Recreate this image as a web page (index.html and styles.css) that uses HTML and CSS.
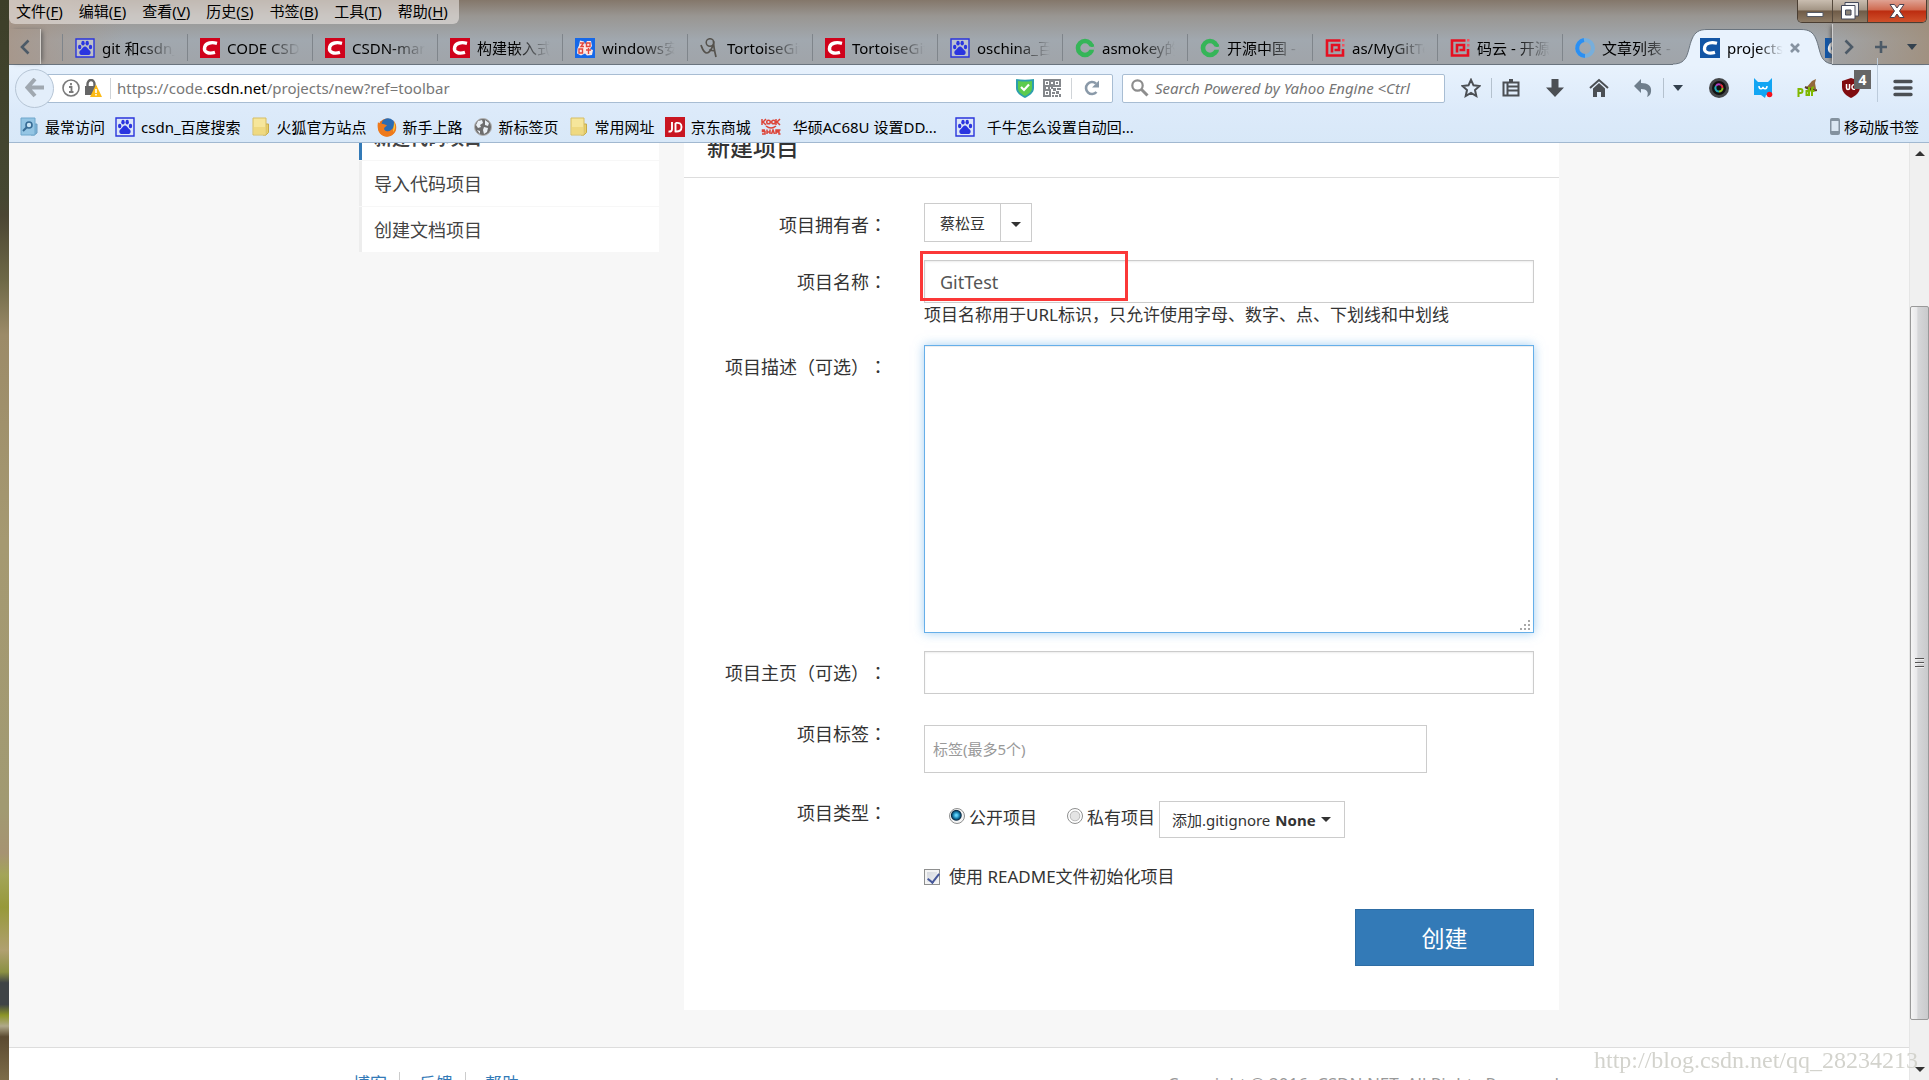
FILE: index.html
```html
<!DOCTYPE html>
<html lang="zh-CN">
<head>
<meta charset="utf-8">
<title>projects</title>
<link rel="stylesheet" href="styles.css">
</head>
<body>
<svg class="defs" aria-hidden="true">
  <symbol id="paw" viewBox="0 0 20 20"><path d="M1 1h18v18H1z" fill="#dfe4f4" fill-opacity=".45" stroke="#2a35dc" stroke-width="1.4"/><g fill="#2a35e0"><ellipse cx="4.7" cy="9" rx="1.7" ry="2.3"/><ellipse cx="8" cy="5.2" rx="1.7" ry="2.4"/><ellipse cx="12.2" cy="5.2" rx="1.7" ry="2.4"/><ellipse cx="15.5" cy="9" rx="1.7" ry="2.3"/><path d="M10 8.6c1.7 0 2.2 1.5 3.4 2.7 1.500 1.200 2.600 2.200 2.200 4-.4 2-2.600 2-5.600 1.600-3 .4-5.200.4-5.600-1.600-.4-1.800.7-2.800 2.200-4C7.800 10.100 8.300 8.600 10 8.600z"/></g></symbol>
  <symbol id="csdn" viewBox="0 0 20 20"><path d="M0 0h20v20H0z" fill="#d0021b"/><path d="M17 5.300c-5-1.300-11-.8-12.300 3.700-1.400 5.300 3.800 7.200 10.300 5.400" fill="none" stroke="#fff" stroke-width="3.400"/></symbol>
  <symbol id="code" viewBox="0 0 20 20"><path d="M0 0h20v20H0z" fill="#1255a5"/><path d="M17 5.300c-5-1.300-11-.8-12.300 3.700-1.400 5.300 3.800 7.200 10.300 5.400" fill="none" stroke="#fff" stroke-width="3.200"/></symbol>
  <symbol id="osc" viewBox="0 0 20 20"><circle cx="10" cy="10" r="7" fill="none" stroke="#35b558" stroke-width="4.600"/><path d="M9.500 8.500h10v3.200h-10z" fill="#a1a7ad"/><path d="M10 9h5l3.500-3v2.800z" fill="#35b558"/></symbol>
  <symbol id="gitee" viewBox="0 0 20 20"><path d="M15.500 2.500H2v15h16V11M7 14.500V7h7v5H9.500" fill="none" stroke="#e60f21" stroke-width="2.600"/><path d="M17 1h2.500v2.500H17zM17 6h2.500v2.500H17z" fill="#ee5561"/></symbol>
  <symbol id="folder" viewBox="0 0 20 20"><path d="M13 7h4.500v8.500l-2.500 2.500h-3z" fill="#e9d06a" stroke="#c4a94a"/><path d="M2 1h13v17H2z" fill="#f6e69b" stroke="#d6bd62"/><path d="M3 10h11v7H3z" fill="#efd980"/></symbol>
</svg>

<div class="desktop">
<div class="wallpaper"></div>
<div class="window">
  <header class="chrome">
    <div class="titlebar">
      <nav class="menubar">
        <button>文件(<u>F</u>)</button><button>编辑(<u>E</u>)</button><button>查看(<u>V</u>)</button><button>历史(<u>S</u>)</button><button>书签(<u>B</u>)</button><button>工具(<u>T</u>)</button><button>帮助(<u>H</u>)</button>
      </nav>
      <div class="controls">
        <button aria-label="最小化"><svg width="18" height="18" viewBox="0 0 18 18"><path d="M1 10.500h16v4H1z" fill="#fff" stroke="#555a66"/></svg></button>
        <button aria-label="还原"><svg width="18" height="18" viewBox="0 0 18 18"><path d="M4 .5h13.500V14H4z" fill="#eee" stroke="#44495a"/><path d="M.5 3.500H14V17H.5z" fill="#fff" stroke="#44495a"/><path d="M4.500 8h5.500v5H4.500z" fill="#8b8276" stroke="#44495a"/></svg></button>
        <button class="close" aria-label="关闭"><svg width="18" height="18" viewBox="0 0 18 18"><path d="M2 2.500h4.500L9 6l2.500-3.500H16L11.500 9l4.500 6.500h-4.500L9 12l-2.500 3.500H2L6.500 9z" fill="#fff" stroke="#4b4250"/></svg></button>
      </div>
    </div>

    <div class="tabbar">
      <button class="scroll-left" aria-label="向左滚动"><svg width="12" height="16" viewBox="0 0 12 16"><path d="M9.500 1.500L3 8l6.500 6.500" fill="none" stroke="#4c5a67" stroke-width="2.600"/></svg></button>
      <div class="tabs">
        <a href="#" class="tab"><svg><use href="#paw"/></svg><span>git 和csdn_百度</span></a>
        <a href="#" class="tab"><svg><use href="#csdn"/></svg><span>CODE CSDN</span></a>
        <a href="#" class="tab"><svg><use href="#csdn"/></svg><span>CSDN-markdown</span></a>
        <a href="#" class="tab"><svg><use href="#csdn"/></svg><span>构建嵌入式系统</span></a>
        <a href="#" class="tab"><svg viewBox="0 0 20 20"><path d="M0 0h20v20H0z" fill="#1668e8"/><path d="M5 2.500l4 1 1 3 2-3.500h4l1 5-2 3 3 1-1 5-5 .500-2-2-4 2-4-2 .500-5 1.500-3z" fill="#fbe9e6"/><path d="M5 5h3.500l-2.500 3.500h3M4 11h3.500v4H4zM11.500 5H15v3.500h-3.500zM11 12h5M13.500 10v6" fill="none" stroke="#e2473c" stroke-width="1.400"/></svg><span>windows安装</span></a>
        <a href="#" class="tab"><svg viewBox="0 0 20 20"><circle cx="10" cy="4.500" r="3.800" fill="none" stroke="#55524d" stroke-width="1.500"/><path d="M1 7c1.500 4 2.500 8 6 8 3 0 5-5 6.500-8.500M13.500 3c0 6 1 10 2.500 16M9 12l6 1" fill="none" stroke="#55524d" stroke-width="1.700"/></svg><span>TortoiseGit</span></a>
        <a href="#" class="tab"><svg><use href="#csdn"/></svg><span>TortoiseGit</span></a>
        <a href="#" class="tab"><svg><use href="#paw"/></svg><span>oschina_百度</span></a>
        <a href="#" class="tab"><svg><use href="#osc"/></svg><span>asmokey的</span></a>
        <a href="#" class="tab"><svg><use href="#osc"/></svg><span>开源中国 -</span></a>
        <a href="#" class="tab"><svg><use href="#gitee"/></svg><span>as/MyGitTest</span></a>
        <a href="#" class="tab"><svg><use href="#gitee"/></svg><span>码云 - 开源中</span></a>
        <a href="#" class="tab"><svg viewBox="0 0 20 20"><circle cx="10" cy="10" r="8" fill="none" stroke="#77aedb" stroke-width="4"/><path d="M10 18a8 8 0 0 1-1-15.900" fill="none" stroke="#2b8ff2" stroke-width="4"/></svg><span>文章列表 -</span></a>
        <a href="#" class="tab active"><svg class="shape" viewBox="0 0 162 36"><path d="M0 35C16 35 14 22 19 10 22 3 26 .5 34 .500H128C136 .5 140 3 143 10 148 22 146 35 162 35V36H0z" fill="#e8f2fd"/><path d="M0 35C16 35 14 22 19 10 22 3 26 .5 34 .500H128C136 .5 140 3 143 10 148 22 146 35 162 35" fill="none" stroke="#6a747e"/></svg><svg><use href="#code"/></svg><span>projects/new</span><svg class="x" viewBox="0 0 10 10"><path d="M1 1l8 8M9 1L1 9" stroke="#8693a1" stroke-width="2.600"/></svg></a>
        <a href="#" class="tab last"><svg><use href="#code"/></svg></a>
      </div>
      <div class="tab-tools">
        <button aria-label="向右滚动"><svg width="12" height="16" viewBox="0 0 12 16"><path d="M2.500 1.500L9 8l-6.500 6.500" fill="none" stroke="#4c5a67" stroke-width="2.600"/></svg></button>
        <button aria-label="新标签"><svg width="14" height="14" viewBox="0 0 14 14"><path d="M7 1v12M1 7h12" stroke="#4c5a67" stroke-width="2.600"/></svg></button>
        <button aria-label="所有标签"><svg width="10" height="6" viewBox="0 0 10 6"><path d="M0 0h10L5 6z" fill="#33414e"/></svg></button>
      </div>
    </div>

    <div class="navbar">
      <button class="back" aria-label="后退"><svg width="20" height="20" viewBox="0 0 20 20"><path d="M10 1L2.500 9.500 10 18M3 9.500h16" fill="none" stroke="#a0a8b0" stroke-width="4"/></svg></button>
      <div class="urlbar">
        <svg width="18" height="18" viewBox="0 0 18 18"><circle cx="9" cy="9" r="8" fill="none" stroke="#7a7a7a" stroke-width="1.600"/><path d="M9 4v2.200M7 8h2.500v5M7 13h4.500" stroke="#7a7a7a" stroke-width="1.800" fill="none"/></svg>
        <svg width="18" height="18" viewBox="0 0 18 18"><path d="M3.500 8V5a3.500 4 0 0 1 7 0v3" fill="none" stroke="#666" stroke-width="2.400"/><path d="M1 7h12v9H1z" fill="#666"/><path d="M12 5.500L18 18H6z" fill="#fdbb16"/><path d="M12 10v4M12 15v1.500" stroke="#fff" stroke-width="1.600"/></svg>
        <i class="bar"></i>
        <a class="url" href="#">https://code.<b>csdn.net</b>/projects/new?ref=toolbar</a>
        <svg width="18" height="20" viewBox="0 0 18 20"><path d="M0 1c6 1 12 1 18 0v9c0 5-5 8-9 10-4-2-9-5-9-10z" fill="#2d9fae"/><path d="M2 3c5 .8 9 .8 14 0v7c0 4-4 6.500-7 8-3-1.500-7-4-7-8z" fill="#5ccb4e"/><path d="M5 9l3 3 5-5.500" stroke="#fff" stroke-width="2.200" fill="none"/></svg>
        <svg class="qr" width="18" height="18" viewBox="0 0 18 18"><path d="M1 1h6v6H1zM11 1h6v6h-6zM1 11h6v6H1z" fill="none" stroke="#84878b" stroke-width="2"/><path d="M3 3h2v2H3zM13 3h2v2h-2zM3 13h2v2H3zM8 0h2v3H8zM8 5h2v5H8zM10 9h3v3h-3zM14 9h4v2h-4zM9 13h3v2H9zM13 12h3v3h-3zM16 15h2v3h-2zM9 16h2v2H9zM12 16h3v2h-3zM0 8h3v2H0zM5 8h2v2H5z" fill="#84878b"/></svg>
        <i class="bar"></i>
        <svg class="reload" width="16" height="16" viewBox="0 0 16 16"><path d="M12.500 12A6 6 0 1 1 12 3.500" fill="none" stroke="#8a99a8" stroke-width="2.600"/><path d="M15 .5v7H8z" fill="#8a99a8"/></svg>
      </div>
      <label class="search"><svg width="18" height="18" viewBox="0 0 18 18"><circle cx="6.500" cy="6.500" r="5.200" fill="none" stroke="#8d8d8d" stroke-width="2.200"/><path d="M10.500 10.500L16.500 16.500" stroke="#8d8d8d" stroke-width="3"/></svg><input type="text" aria-label="搜索" placeholder="Search Powered by Yahoo Engine &lt;Ctrl"></label>
      <div class="tools">
        <button aria-label="收藏"><svg viewBox="0 0 20 20"><path d="M10 1.800l2.500 5.500 6 .7-4.500 4 1.300 6L10 15l-5.300 3 1.300-6-4.500-4 6-.7z" fill="none" stroke="#4b4f54" stroke-width="2"/></svg></button>
        <button aria-label="书签列表" class="ruled"><svg viewBox="0 0 20 20"><path d="M8 1h4v3H8z" fill="#4b4f54"/><path d="M2.500 4.500h15v13h-15zM6.500 5v12M7 8.500h10M7 12.500h10" fill="none" stroke="#4b4f54" stroke-width="2"/></svg></button>
        <button aria-label="下载"><svg viewBox="0 0 20 20"><path d="M6.500 1h7v8.500H19L10 19 1 9.500h5.500z" fill="#4b4f54"/></svg></button>
        <button aria-label="主页"><svg viewBox="0 0 20 20"><path d="M1 10l9-8 9 8" fill="none" stroke="#4b4f54" stroke-width="2"/><path d="M4 10.500l6-5.500 6 5.500V19h-4v-5H8v5H4z" fill="#4b4f54"/></svg></button>
        <button aria-label="撤销"><svg viewBox="0 0 20 20"><path d="M8 1v4c7 0 11 3 10 9-.5 3-2 4-4 5 2-5 0-8-6-8v4L1 8z" fill="#6f7e8c"/></svg></button>
        <button aria-label="更多" class="ruled small"><svg viewBox="0 0 10 6"><path d="M0 0h10L5 6z" fill="#33414e"/></svg></button>
        <button aria-label="相机"><svg viewBox="0 0 20 20"><circle cx="10" cy="10" r="10" fill="#45474a"/><circle cx="10" cy="10" r="7" fill="#111"/><g fill="none" stroke-width="2"><path d="M7 8a3.500 3.500 0 0 1 4.500-1.300" stroke="#b13bc4"/><path d="M11.500 6.700A3.500 3.500 0 0 1 13.500 10" stroke="#e0303c"/><path d="M13.500 10a3.500 3.500 0 0 1-3.500 3.500" stroke="#8fbf26"/><path d="M10 13.500A3.500 3.500 0 0 1 7 8" stroke="#22a6b8"/></g></svg></button>
        <button aria-label="扩展"><svg viewBox="0 0 20 20"><path d="M1 0l4 4h10l4-4v16l-6 1-1 3-4-3H1z" fill="#12a5f3"/><path d="M6 8c0 3.500 3.500 3.500 4 1 .5 2.500 4 2.500 4-1" fill="none" stroke="#fff" stroke-width="1.500"/><circle cx="16.500" cy="16.500" r="2.800" fill="#f5121d"/></svg></button>
        <button aria-label="PDF"><svg viewBox="0 0 20 20"><path d="M9 10l6-7 4-2-1 4 1 6-5 2z" fill="#93683b"/><path d="M8 9c4 2 8 4 12 3" stroke="#594022" stroke-width="2" fill="none"/><path d="M1.500 19v-8h2a2 2 0 0 1 0 4h-2M12 9v8H9.500v-4H12M15 18v-7q0-2 2-1.500M13.500 13h4" stroke="#80b800" stroke-width="2" fill="none"/></svg></button>
        <button aria-label="uBlock" class="ub"><svg viewBox="0 0 20 20"><path d="M10 0l9 3v6c0 6-5 9-9 11-4-2-9-5-9-11V3z" fill="#800c10"/><path d="M5.500 6v4q0 1.500 1.500 1.500T8.500 10V6M14 7q-3-1-3 2t3 2" fill="none" stroke="#fff" stroke-width="1.500"/></svg><span>4</span></button>
        <button aria-label="菜单" class="burger"><svg viewBox="0 0 20 20"><path d="M2 3.500h16M2 10h16M2 16.500h16" stroke="#4b4f54" stroke-width="3.400" stroke-linecap="round"/></svg></button>
      </div>
    </div>

    <nav class="bookmarks">
      <a href="#"><svg viewBox="0 0 20 20"><path d="M13 7h5v9l-3 2h-3z" fill="#7fb4d8" stroke="#6a9cc0"/><path d="M2 1h14v17H2z" fill="#94c5e4" stroke="#6fa7cc"/><circle cx="10" cy="8" r="3" fill="#c9e4f5" stroke="#376b94" stroke-width="1.600"/><path d="M8 10l-4 4" stroke="#376b94" stroke-width="2"/></svg>最常访问</a>
      <a href="#"><svg><use href="#paw"/></svg>csdn_百度搜索</a>
      <a href="#"><svg><use href="#folder"/></svg>火狐官方站点</a>
      <a href="#"><svg viewBox="0 0 20 20"><circle cx="10" cy="10.500" r="9" fill="#e8701a"/><circle cx="11" cy="8" r="6.800" fill="#2b6cb3"/><path d="M1 5c1 2 3 1 5 2 2 .5 3 1 4 1-1 2-3 2-3 4 1 3 5 3 7 1 3-2 4-6 3-9 3 4 3 9 0 12.500-4 4.500-11 4-14 0C.5 13 .2 9 1 5z" fill="#ee7a1c"/><path d="M17 5c2 4 1 8-1 10 0-3 1-6 1-10z" fill="#fcc83a"/></svg>新手上路</a>
      <a href="#"><svg viewBox="0 0 20 20"><circle cx="10" cy="10" r="8.500" fill="#6d6d6d" stroke="#b3b3b3"/><path d="M5 4l4-1 1 3-3 2 1 2-3 1-2-3zM12 3l4 3-1 3-3-1zM11 10l4 1-1 4-3 2-1-4zM4 13l3 1v3z" fill="#e9eef3"/></svg>新标签页</a>
      <a href="#"><svg><use href="#folder"/></svg>常用网址</a>
      <a href="#"><svg viewBox="0 0 20 20"><path d="M0 0h20v20H0z" fill="#c91622"/><path d="M7 5v7q0 3-3.500 2.500M10.500 6v8.500q6 .5 6-4.500t-6-4" fill="none" stroke="#fff" stroke-width="1.900"/></svg>京东商城</a>
      <a href="#" class="wide"><svg viewBox="0 0 20 20"><g fill="none" stroke="#dd4438" stroke-width="1.500"><path d="M1 2v6M5 2L2 5l3 3M15 2v6M19 2l-3 3 3 3"/><circle cx="7.500" cy="5" r="1.800"/><circle cx="12.500" cy="5" r="1.800"/><path d="M5 9q5 4 10 0M4 13H1.500v1.500H4V17H1M6 12.500V17M9 12.500V17M6 15h3M10.500 17l1.500-4 1.500 4M15 17v-4h1.500v2H15M19.500 13H18v4h1.500"/></g></svg>华硕AC68U 设置DD...</a>
      <a href="#" class="wide"><svg><use href="#paw"/></svg>千牛怎么设置自动回...</a>
      <a href="#" class="mobile"><svg viewBox="0 0 12 20"><rect x="1" y="1" width="10" height="17" rx="2" fill="#84929f"/><path d="M2.500 4h7v10h-7z" fill="#dbe7f2"/></svg>移动版书签</a>
    </nav>
  </header>

  <div class="viewport">
    <div class="page">
      <div class="container">
        <aside class="sidebar">
          <a href="#" class="on">新建代码项目</a>
          <a href="#">导入代码项目</a>
          <a href="#">创建文档项目</a>
        </aside>
        <main class="card">
          <h1>新建项目</h1>
          <form>
            <div class="row">
              <span class="label">项目拥有者<i lang="zh-TW">：</i></span>
              <div class="split"><button type="button">蔡松豆</button><button type="button" aria-label="选择拥有者"><i class="caret"></i></button></div>
            </div>
            <div class="row">
              <label class="label" for="name">项目名称<i lang="zh-TW">：</i></label>
              <div class="field"><input id="name" type="text" value="GitTest"><div class="marker"></div><p>项目名称用于URL标识，只允许使用字母、数字、点、下划线和中划线</p></div>
            </div>
            <div class="row">
              <label class="label" for="desc">项目描述<i lang="zh-TW">（</i>可选<i lang="zh-TW">）：</i></label>
              <div class="field"><textarea id="desc"></textarea><svg class="grip" width="12" height="12" viewBox="0 0 12 12"><path d="M9 0h2v2H9zM5 4h2v2H5zM9 4h2v2H9zM1 8h2v2H1zM5 8h2v2H5zM9 8h2v2H9z" fill="#a8a8a8"/></svg></div>
            </div>
            <div class="row">
              <label class="label" for="home">项目主页<i lang="zh-TW">（</i>可选<i lang="zh-TW">）：</i></label>
              <input id="home" type="text">
            </div>
            <div class="row tags">
              <label class="label" for="tags">项目标签<i lang="zh-TW">：</i></label>
              <input id="tags" type="text" placeholder="标签(最多5个)">
            </div>
            <div class="row">
              <span class="label">项目类型<i lang="zh-TW">：</i></span>
              <div class="types">
                <label class="choice"><input type="radio" name="type" checked>公开项目</label>
                <label class="choice"><input type="radio" name="type">私有项目</label>
                <label class="ignore">添加.gitignore <select><option>None</option></select><i class="caret"></i></label>
              </div>
            </div>
            <label class="readme"><input type="checkbox" checked>使用 README文件初始化项目</label>
            <button class="create" type="submit">创建</button>
          </form>
        </main>
      </div>
      <footer>
        <div class="foot">
          <nav><a href="#">博客</a><a href="#">反馈</a><a href="#">帮助</a></nav>
          <span>Copyright © 2016, CSDN.NET, All Rights Reserved</span>
        </div>
      </footer>
    </div>
    <div class="scrollbar"><i class="up"></i><div class="thumb"><i></i></div><i class="down"></i></div>
  </div>
</div>
</div>
<div class="watermark">http://blog.csdn.net/qq_28234213</div>
</body>
</html>
```

FILE: styles.css
```css
* { box-sizing: border-box; }
body { margin: 0; font: 15px/20px "Noto Sans", "Noto Sans CJK SC", sans-serif; color: #333; }
button, input, select, textarea { font: inherit; color: inherit; margin: 0; padding: 0; border: 0; background: none; }
a { color: inherit; text-decoration: none; }
i { font-style: normal; }
svg { flex: none; display: block; }
.defs { position: absolute; width: 0; height: 0; }

.desktop { display: flex; height: 100vh; overflow: hidden; }
.wallpaper { flex: none; width: 9px; background: linear-gradient(#3d3f29, #454731 18%, #4b4633 20%, #6e6947 26%, #9c8b68 31%, #a59971 50%, #a19a72 75%, #a69372 79%, #a3a558 81%, #97993a 84%, #b0a070 88%, #8b9143 90%, #3f4447 91%, #3f4447 93%, #8b9526 94%, #b0a98a 95%, #5b4a31 96%, #7d6c48); }
.window { flex: 1; min-width: 0; display: flex; flex-direction: column; }

/* Browser chrome */
.chrome { flex: none; color: #000; background: linear-gradient(90deg, rgba(168,148,132,.8), rgba(168,148,132,0) 6%, rgba(168,148,132,0) 94%, rgba(160,140,118,.8)), linear-gradient(#84776a, #999692 16px, #a1a8af 40px, #a0a4a9 64px); }
.titlebar { display: flex; justify-content: space-between; height: 24px; }
.menubar { display: flex; gap: 16px; padding: 0 11px 0 7px; background: rgba(235,230,226,.6); border-radius: 0 0 6px 6px; }
.menubar button { height: 22px; line-height: 22px; white-space: nowrap; }
.menubar u { text-underline-offset: 2px; }
.controls { display: flex; height: 23px; margin-right: 2px; border: 1px solid #4a3e33; border-top: 0; border-radius: 0 0 5px 5px; overflow: hidden; }
.controls button { width: 35px; display: grid; place-items: center; background: linear-gradient(#c9bdb0, #a39585 45%, #6f5b47 50%, #8d7b66); border-right: 1px solid #54483c; }
.controls .close { width: 58px; border: 0; background: linear-gradient(#dfa293, #cf6a50 45%, #bc2c10 50%, #d0502a); }
.tabbar { display: flex; height: 41px; border-bottom: 1px solid #6a747e; }
.scroll-left { width: 32px; display: grid; place-items: center; border-right: 1px solid #d6d2cd; box-shadow: 3px 0 5px -2px #555; margin-top: 5px; }
.tabs { flex: 1; min-width: 0; display: flex; padding-left: 21px; overflow: hidden; margin-bottom: -1px; }
.tab { position: relative; flex: none; width: 125px; display: flex; align-items: center; gap: 7px; padding: 6px 0 0 13px; }
.tab:not(.active):not(.last)::before { content: ""; position: absolute; left: 0; top: 10px; height: 27px; border-left: 1px solid #7f858b; }
.tab svg { width: 20px; height: 20px; position: relative; }
.tab span { position: relative; width: 76px; overflow: hidden; white-space: nowrap; mask-image: linear-gradient(90deg, #000 50%, transparent 96%); }
.tab.active { z-index: 1; }
.tab.active span { width: 56px; mask-image: linear-gradient(90deg, #000 55%, transparent); }
.tab .shape { position: absolute; left: -14px; bottom: 0; width: 162px; height: 36px; }
.tab .x { width: 10px; height: 10px; }
.tab.last { z-index: 2; }
.tab-tools { flex: none; width: 97px; display: flex; justify-content: space-between; align-items: center; padding: 5px 12px 0 10px; border-left: 1px solid #d0d0d0; box-shadow: -3px 0 4px -2px #555; z-index: 2; }

.navbar { display: flex; align-items: center; height: 46px; padding-left: 6px; background: linear-gradient(#e8f2fd, #dceafa); }
.back { z-index: 1; flex: none; width: 39px; height: 39px; display: grid; place-items: center; border: 1px solid #b6c5d5; border-radius: 50%; background: #e3eefa; }
.urlbar { flex: 1; min-width: 0; display: flex; align-items: center; gap: 4px; height: 29px; margin-left: -9px; padding: 0 12px 0 16px; background: #fff; border: 1px solid #a8bdd3; border-radius: 2px; }
.url { flex: 1; margin-left: 2px; color: #777; white-space: nowrap; overflow: hidden; }
.url b { font-weight: 400; color: #000; }
.bar { width: 1px; height: 21px; margin-left: 4px; background: #d0d4d8; }
.qr { margin: 0 2px 0 5px; }
.reload { margin-left: 8px; }
.search { flex: none; display: flex; align-items: center; gap: 6px; width: 323px; height: 29px; margin-left: 9px; padding: 0 6px 0 8px; background: #fff; border: 1px solid #a8bdd3; border-radius: 2px; }
.search input { flex: 1; min-width: 0; font-style: italic; }
.search input::placeholder { color: #757575; opacity: 1; }
.tools { flex: none; display: flex; align-items: center; gap: 24px; width: 484px; padding: 0 16px; }
.tools button { position: relative; flex: none; width: 20px; height: 20px; }
.tools svg { width: 20px; height: 20px; }
.tools .ruled { margin-left: -4px; }
.tools .ruled::before { content: ""; position: absolute; left: -10px; top: 0; height: 20px; border-left: 1px solid #b4c1ce; }
.tools .small { width: 10px; margin-right: 2px; display: grid; place-items: center; }
.tools .small svg { width: 10px; height: 6px; }
.ub span { position: absolute; left: 13px; top: -8px; width: 17px; height: 19px; background: #666; color: #fff; font: bold 14px/19px "Noto Sans", sans-serif; text-align: center; }
.tools .burger { margin-left: auto; }
.tools .burger::before { content: ""; position: absolute; left: -16px; top: -20px; height: 44px; border-left: 1px solid #bccbdb; }
.bookmarks { display: flex; gap: 10px; align-items: center; height: 32px; padding: 1px 10px 0; background: linear-gradient(#dceafa, #d8e8f8); border-bottom: 1px solid #a1b8d0; white-space: nowrap; }
.bookmarks a { display: flex; align-items: center; gap: 6px; }
.bookmarks svg { width: 20px; height: 20px; }
.bookmarks .wide { gap: 12px; margin-right: 8px; }
.bookmarks .mobile { margin-left: auto; gap: 3px; }
.bookmarks .mobile svg { width: 12px; }

/* Page */
.viewport { flex: 1; min-height: 0; display: flex; overflow: hidden; background: #f7f7f7; }
.page { flex: 1; min-width: 0; margin-top: -29px; }
.container, .foot { width: 100%; max-width: 1200px; margin: 0 auto; }
.container { display: flex; align-items: flex-start; gap: 25px; padding-bottom: 37px; }
.sidebar { flex: none; width: 300px; display: grid; gap: 1px; font-size: 18px; }
.sidebar a { height: 45px; line-height: 46px; padding-left: 12px; background: #fff; border-left: 3px solid #ededed; color: #444; }
.sidebar .on { height: 46px; line-height: 48px; border-color: #337ab7; font-weight: 700; }
.card { flex: 1; min-width: 0; background: #fff; padding-bottom: 44px; }
h1 { margin: 0; height: 64px; padding: 19px 0 0 23px; font-size: 23px; line-height: 28px; font-weight: 500; border-bottom: 1px solid #ddd; }
form { display: flex; flex-direction: column; padding: 25px 25px 0 0; font-size: 17px; line-height: 24px; }
.row { display: grid; grid-template-columns: 203px 1fr; column-gap: 37px; align-items: start; margin-bottom: 18px; }
.label { padding-top: 8px; text-align: right; font-size: 18px; line-height: 26px; white-space: nowrap; text-spacing-trim: space-all; }
.label i { font-family: "Noto Sans CJK TC", sans-serif; }
.row input[type=text], textarea { display: block; width: 100%; border: 1px solid #ccc; background: #fff; box-shadow: inset 0 1px 2px rgba(0,0,0,.08); }
.row input[type=text] { height: 43px; padding: 0 15px; font-size: 18px; color: #555; }
.field { position: relative; }
.field p { margin: 0; }
.marker { position: absolute; left: -4px; top: -9px; width: 208px; height: 50px; border: 3px solid #fb3838; pointer-events: none; }
textarea { height: 288px; resize: none; border-color: #66afe9; box-shadow: inset 0 1px 1px rgba(0,0,0,.075), 0 0 10px rgba(102,175,233,.6); outline: 0; }
.grip { position: absolute; right: 3px; bottom: 1px; }
.split { display: flex; font-size: 15px; }
.split button { height: 39px; border: 1px solid #ccc; padding: 0 15px; background: #fff; }
.split button + button { margin-left: -1px; width: 32px; padding: 0 10px; }
.caret { display: inline-block; border: 5px solid transparent; border-top-color: #333; border-bottom: 0; vertical-align: middle; }
.row.tags input { width: 503px; max-width: 100%; height: 48px; margin-top: 13px; padding: 0 8px; font-size: 15px; box-shadow: none; }
.tags input::placeholder { color: #999; opacity: 1; }
.types { display: flex; padding: 10px 0 0 25px; }
.choice { display: flex; gap: 4px; margin-right: 30px; padding-top: 5px; white-space: nowrap; }
.choice + .choice { margin-right: 4px; }
input[type=radio] { appearance: none; flex: none; width: 16px; height: 16px; margin-top: 2px; border: 1px solid #8e8f8f; border-radius: 50%; background: radial-gradient(#e4e4e4 40%, #bbb 48%, #fff 58%); }
input[type=radio]:checked { background: radial-gradient(circle at 45% 45%, #61d3fb 8%, #1478a8 30%, #0b2b45 45%, #f4f4f4 54%); }
.ignore { display: flex; align-items: center; gap: 5px; height: 37px; padding: 0 13px 0 12px; border: 1px solid #ccc; font-size: 15px; white-space: nowrap; }
.ignore select { appearance: none; font-weight: 700; }
.readme { display: flex; align-items: center; gap: 9px; margin: 8px 0 19px 240px; height: 26px; }
.readme input { appearance: none; width: 16px; height: 16px; border: 1px solid #8e8f8f; background: linear-gradient(135deg, #cfd3da, #f6f6f6); box-shadow: inset 0 0 0 2px #f4f4f4; position: relative; }
.readme input::before { content: ""; position: absolute; left: 5px; top: 1px; width: 5px; height: 10px; border: solid #46589a; border-width: 0 2px 2px 0; transform: rotate(38deg); }
.create { align-self: flex-end; width: 179px; height: 57px; background: #337ab7; border: 1px solid #2e6da4; color: #fff; font-size: 23px; line-height: 30px; }
footer { background: #fff; border-top: 1px solid #ddd; padding: 24px 0; }
.foot { display: flex; justify-content: space-between; line-height: 24px; font-size: 17px; color: #999; }
.foot nav { display: flex; margin-left: -6px; color: #337ab7; }
.foot nav a { padding: 0 12px 0 19px; border-right: 1px solid #ccc; }
.foot nav a:first-child { padding-left: 0; }
.foot nav a:last-child { border: 0; }
.scrollbar { flex: none; width: 20px; display: flex; flex-direction: column; align-items: center; background: #f0f0f0; border-left: 1px solid #e6e6e6; padding: 8px 0; }
.up, .down { flex: none; border: 5px solid transparent; }
.up { border-bottom-color: #333; border-top: 0; }
.down { border-top-color: #333; border-bottom: 0; }
.thumb { flex: 1; width: 19px; margin: 150px 0 47px; display: grid; place-items: center; border: 1px solid #999; border-radius: 2px; background: linear-gradient(90deg, #f5f5f5, #e8e8ea 35%, #d6d7d9 40%, #c9cacc); }
.thumb i { width: 9px; height: 10px; background: repeating-linear-gradient(#555 0 1px, #eee 1px 2px, transparent 2px 4px); }
.watermark { position: fixed; right: 11px; bottom: 6px; font: 24px/28px "Liberation Serif", serif; color: #d3d3cd; }
```
